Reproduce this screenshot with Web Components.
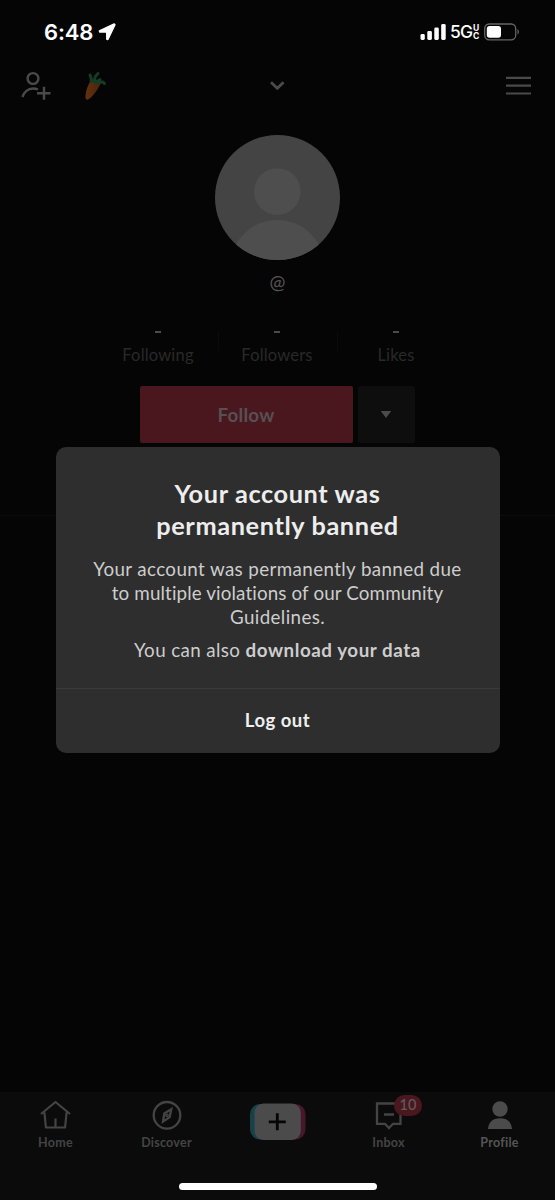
<!DOCTYPE html>
<html lang="en">
<head>
<meta charset="utf-8">
<title>Profile</title>
<style>
html,body{margin:0;background:#050505}
body{font-family:Lato,"Open Sans",sans-serif;width:555px;height:1200px;overflow:hidden;font-variant-ligatures:none}
</style>
</head>
<body>
<profile-screen></profile-screen>
<script>
const define = (name, markup) => customElements.define(name, class extends HTMLElement {
  constructor() {
    super();
    const t = document.createElement('template');
    t.innerHTML = markup;
    this.attachShadow({mode: 'open'}).append(t.content.cloneNode(true));
  }
});

define('status-bar', `
<style>
:host{display:flex;height:60px;box-sizing:border-box;padding:0 35px 0 44px;justify-content:space-between;color:#fff;font-family:Inter,sans-serif}
.l,.r{display:flex;align-items:center;height:63px}
.t{font-size:22px;font-weight:600;letter-spacing:-.15px}
.l svg{margin-left:5px}
.g{font-size:17.5px;font-weight:500;margin-left:4px;letter-spacing:-1px}
.uc{display:grid;font-size:8.5px;font-weight:700;line-height:8px;margin:0 5px 0 1px;width:6px}
svg{display:block}
</style>
<div class="l"><span class="t">6:48</span><svg width="18" height="18" viewBox="0 0 18 18"><path d="M16.2 1 1.4 7.8 1.6 9h6.8l.3.3.1 7 1.1.2L17 1.8z" fill="#fff" stroke="#fff" stroke-width="1.4" stroke-linejoin="round"/></svg></div>
<div class="r"><svg width="26" height="18" viewBox="0 0 26 18" fill="#fff"><rect x="0.500" y="11" width="4.300" height="6" rx="1.4"/><rect x="7.300" y="8" width="4.600" height="9" rx="1.4"/><rect x="14.300" y="4.5" width="4.500" height="12.5" rx="1.4"/><rect x="21.200" y="1" width="4.500" height="16" rx="1.4"/></svg><span class="g">5G</span><span class="uc"><span>U</span><span>C</span></span><svg width="36" height="18" viewBox="0 0 36 18"><rect x=".7" y="1" width="31" height="15.8" rx="4.5" fill="none" stroke="#666" stroke-width="1.3"/><rect x="2.8" y="3" width="14.2" height="11.8" rx="2.8" fill="#fff"/><path d="M33.500 6v5.5q1.5-.8 1.5-2.7T33.500 6" fill="#666"/></svg></div>`);

define('profile-header', `
<style>
:host{display:grid;grid-template-columns:1fr 20px 1fr;align-items:center;height:52px;padding:0 24px 0 21px}
.l{display:flex;align-items:center;gap:31px}.r{justify-self:end}
svg{display:block}
</style>
<div class="l"><svg width="31" height="32" viewBox="0 0 31 32" fill="none" stroke="#4a4a4a" stroke-width="2.4"><circle cx="12" cy="8.500" r="5.4"/><path d="M1.4 27C3 22.3 7 18.500 12 18.500q2.600 0 5 1"/><path d="M16 23.2h13.500M23 16.7v13"/></svg>
<svg width="24" height="32" viewBox="0 0 24 32"><defs><linearGradient id="c" x1="0" x2="1"><stop stop-color="#63310f"/><stop offset="1" stop-color="#4a250c"/></linearGradient></defs><path d="M6.500 12.500Q11 9.500 17.500 13.500c-2 5-7 12.500-11.500 15.500Q3 31 2.500 28c0-7 2-11 4-15.500" fill="url(#c)"/><path d="m9 11.500-2-6.500M11.500 11.500 12 7l3-3.500M13 12l4-2.500M14 12.500l6-.500 1.500 1.500M8 10.500l6 2" fill="none" stroke="#143c25" stroke-width="3" stroke-linecap="round" stroke-linejoin="round"/></svg></div>
<svg width="20" height="14" viewBox="0 0 20 14" fill="none" stroke="#4a4a4a" stroke-width="2.8"><path d="m5 3.300 6.300 6 6.300-6"/></svg>
<svg class="r" width="25" height="22" viewBox="0 0 25 22" stroke="#4a4a4a" stroke-width="2.2"><path d="M0 2.800h25M0 10.700h25M0 18.500h25"/></svg>`);

define('user-avatar', `
<style>:host{display:block;width:124.500px;height:124.500px;border-radius:50%;overflow:hidden}svg{display:block}</style>
<svg width="125" height="125" viewBox="0 0 125 125"><path fill="#444" d="M0 0h125v125H0z"/><circle cx="62.300" cy="56.600" r="23.300" fill="#4e4e4e"/><circle cx="62.300" cy="132.500" r="47.500" fill="#4e4e4e"/></svg>`);

define('stat-item', `
<style>:host{display:grid;justify-items:center;align-content:start;width:119px;color:#292929;font-size:16.500px;line-height:22px}
i{display:block;width:6px;height:2px;background:#4b4b4b;margin:11px 0 11px}
span{letter-spacing:.18px;white-space:nowrap}</style><i></i><span><slot></slot></span>`);

define('follow-actions', `
<style>:host{display:flex;gap:5px;justify-content:center}
div{height:57px;border-radius:2px;display:grid;place-items:center}
.f{width:213px;background:#4a171f;color:#575053;font-size:18.800px;font-weight:700;letter-spacing:.25px}
.f span{padding:0 1px 1px 0}
.d{width:57px;background:#0e0e0e}svg{display:block;margin:0 1px 1px 0}</style>
<div class="f"><span>Follow</span></div><div class="d"><svg width="12" height="9" viewBox="0 0 12 9"><path d="M.700 1h10.600L6 8z" fill="#4b4b4b"/></svg></div>`);

define('ban-dialog', `
<style>
:host{display:flex;flex-direction:column;width:444px;height:305.500px;border-radius:10px;background:#2e2e2e;text-align:center;color:#cdcdcd}
main{height:241.500px;box-sizing:border-box;padding-top:31px;border-bottom:1px solid #3b3b3b}
h1{margin:0;font-size:25.300px;line-height:31.500px;color:#ededed;font-weight:700;letter-spacing:.62px}
p{margin:0;font-size:18.800px;line-height:24px;letter-spacing:.38px}
b{letter-spacing:.55px}
.a{margin-top:15.500px}.b{margin-top:9px}
footer{flex:1;display:grid;place-items:center;color:#efefef;font-weight:700;font-size:18.500px;letter-spacing:.5px}
footer span{padding-bottom:2px}
h1 span,p span{white-space:nowrap}
</style>
<main><h1><span>Your account was</span><br><span>permanently banned</span></h1>
<p class="a"><span>Your account was permanently banned due</span><br><span style="letter-spacing:.13px">to multiple violations of our Community</span><br><span>Guidelines.</span></p><p class="b"><span>You can also <b>download your data</b></span></p></main><footer><span>Log out</span></footer>`);

define('tab-item', `
<style>:host{display:flex;flex-direction:column;align-items:center;color:#444;font-size:12.500px;font-weight:700;position:relative}
.i{height:42px;display:flex;align-items:center;box-sizing:border-box;padding:4px 0 0 0}.t{line-height:18px;letter-spacing:.25px}</style>
<div class="i"><slot name="icon"></slot></div><span class="t"><slot></slot></span><slot name="badge"></slot>`);

define('count-badge', `
<style>:host{position:absolute;left:61px;top:3px;width:28px;height:21px;border-radius:11px;background:#4a171f;color:#625a5c;display:grid;place-items:center;font-size:14.500px;line-height:20px;font-weight:500}span{padding-bottom:1px}</style><span><slot></slot></span>`);

define('tab-bar', `
<style>:host{display:grid;grid-template-columns:repeat(5,111px);height:108px;background:#0b0b0b;position:relative}
svg{display:block}.plus{display:flex;justify-content:center;padding-top:11px}
.home{position:absolute;left:178.500px;bottom:10.500px;width:198.500px;height:6.500px;border-radius:4px;background:#fff}</style>
<tab-item><svg slot="icon" width="32" height="30" viewBox="0.500 0 32 30" fill="none" stroke="#444" stroke-width="2.200" stroke-linejoin="round"><path d="M1.500 14 16 2l14.500 12M4 13h1l1.400 14.500h19.200L27 13h1M16 18.500v9"/></svg>Home</tab-item>
<tab-item><svg slot="icon" width="30" height="30" viewBox="0 -.300 30 30" fill="none" stroke="#444" stroke-width="2.300"><circle cx="15" cy="15" r="13.300"/><path d="M19.300 8.800 12.300 13.200 11 21.300l6.700-4.500z"/><circle cx="15" cy="15" r=".7"/></svg>Discover</tab-item>
<div class="plus"><svg width="56" height="38" viewBox="0 0 56 38"><rect x="0" y="1" width="40" height="35.500" rx="10" fill="#154247"/><rect x="15.500" y="1" width="40" height="35.500" rx="10" fill="#49172b"/><rect x="4.500" y=".5" width="46.300" height="36.500" rx="9" fill="#4b4b4b"/><path d="M18.800 18.800h17M27.300 10.300v17" stroke="#050505" stroke-width="2.800"/></svg></div>
<tab-item><svg slot="icon" width="28" height="29" viewBox="0 0 28 29" fill="none" stroke="#444" stroke-width="2.300"><path d="M2 2.500h23.500v20.300h-7.500L14 27l-4-4.200H2zM9 13.500h10"/></svg>Inbox<count-badge slot="badge">10</count-badge></tab-item>
<tab-item style="color:#555"><svg slot="icon" width="26" height="29" viewBox="0 .500 26 29" fill="#4b4b4b"><circle cx="13" cy="8.500" r="7.700"/><path d="M1 28.500q1-10.800 12-10.800t12 10.800z"/></svg>Profile</tab-item>
<div class="home"></div>`);

define('profile-screen', `
<style>
:host{display:flex;flex-direction:column;width:555px;height:1200px;background:#050505;position:relative}
user-avatar{margin:23px auto .5px}
.at{text-align:center;color:#555;font-size:19px;line-height:22px;margin-top:11px}
.stats{display:flex;justify-content:center;margin-top:27px;padding-right:1px;height:66px}
.stats stat-item+stat-item{background:linear-gradient(#0b0b0b,#0b0b0b) 0 11px/1px 20px no-repeat}
.rule{height:1px;background:#0c0c0c;margin-top:72px}
tab-bar{margin-top:auto}
ban-dialog{position:absolute;left:55.500px;top:447.200px}
</style>
<status-bar></status-bar><profile-header></profile-header><user-avatar></user-avatar><div class="at">@</div>
<div class="stats"><stat-item>Following</stat-item><stat-item>Followers</stat-item><stat-item>Likes</stat-item></div>
<follow-actions></follow-actions><div class="rule"></div><tab-bar></tab-bar><ban-dialog></ban-dialog>`);
</script>
</body>
</html>
